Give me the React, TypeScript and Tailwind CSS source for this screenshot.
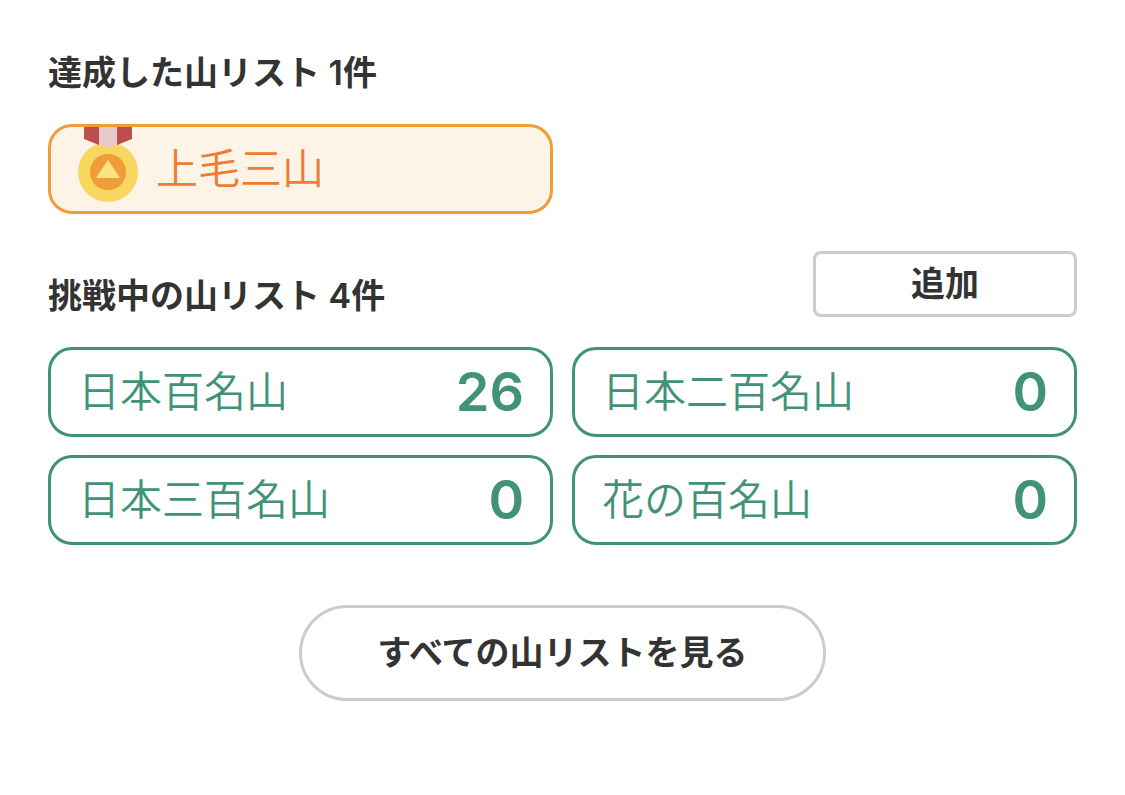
const achievedLists = [{ id: 1, name: "上毛三山" }];

const challengingLists = [
  { id: 1, name: "日本百名山", count: 26 },
  { id: 2, name: "日本二百名山", count: 0 },
  { id: 3, name: "日本三百名山", count: 0 },
  { id: 4, name: "花の百名山", count: 0 },
];

function Medal() {
  return (
    <svg width="60" height="75" viewBox="0 0 60 75" className="shrink-0" aria-hidden="true">
      <circle cx="30" cy="45" r="30" fill="#f9d65d" />
      <circle cx="30" cy="45" r="18" fill="#f09c38" />
      <path d="M30 33L42 51H18Z" fill="#fae681" />
      <path d="M6 0H21V18L6 12Z" fill="#bc4e4b" />
      <path d="M54 0H39V18L54 12Z" fill="#bc4e4b" />
      <path d="M21 0H39V18L30 21L21 18Z" fill="#e7c9c9" />
    </svg>
  );
}

export default function App() {
  return (
    <main
      lang="ja"
      className="bg-white px-12 pt-12 pb-24 font-['Inter','Noto_Sans_CJK_JP',sans-serif] text-[#333333]"
    >
      <section>
        <h2 className="text-[34px] leading-[50px] font-semibold">
          達成した山リスト {achievedLists.length}件
        </h2>
        <div className="mt-[26px] grid grid-cols-2 gap-x-[19px] gap-y-[18px]">
          {achievedLists.map((list) => (
            <a
              key={list.id}
              href="#"
              className="flex h-[90px] items-center gap-[18px] rounded-3xl border-3 border-[#f09c38] bg-[#fdf4e7] px-[27px] text-[42px] leading-[62px] font-[350] text-[#ed7d31]"
            >
              <div className="self-start">
                <Medal />
              </div>
              <span>{list.name}</span>
            </a>
          ))}
        </div>
      </section>

      <section className="mt-[37px]">
        <div className="flex items-end justify-between">
          <h2 className="text-[34px] leading-[50px] font-semibold">
            挑戦中の山リスト {challengingLists.length}件
          </h2>
          <button
            type="button"
            className="mb-1 flex h-[66px] w-[264px] items-center justify-center rounded-lg border-3 border-[#cccccc] text-[34px] leading-[50px] font-semibold"
          >
            追加
          </button>
        </div>
        <div className="mt-[26px] grid grid-cols-2 gap-x-[19px] gap-y-[18px]">
          {challengingLists.map((list) => (
            <a
              key={list.id}
              href="#"
              className="flex h-[90px] items-center justify-between rounded-3xl border-3 border-[#419277] pr-[26px] pl-[27px] text-[#419277]"
            >
              <span className="text-[42px] leading-[62px] font-[350]">{list.name}</span>
              <span className="text-[54px] leading-[62px] font-semibold">{list.count}</span>
            </a>
          ))}
        </div>
      </section>

      <div className="mt-[60px] flex justify-center">
        <a
          href="#"
          className="flex h-24 items-center rounded-full border-3 border-[#cccccc] px-[75px] text-[34px] leading-[50px] font-semibold"
        >
          すべての山リストを見る
        </a>
      </div>
    </main>
  );
}
